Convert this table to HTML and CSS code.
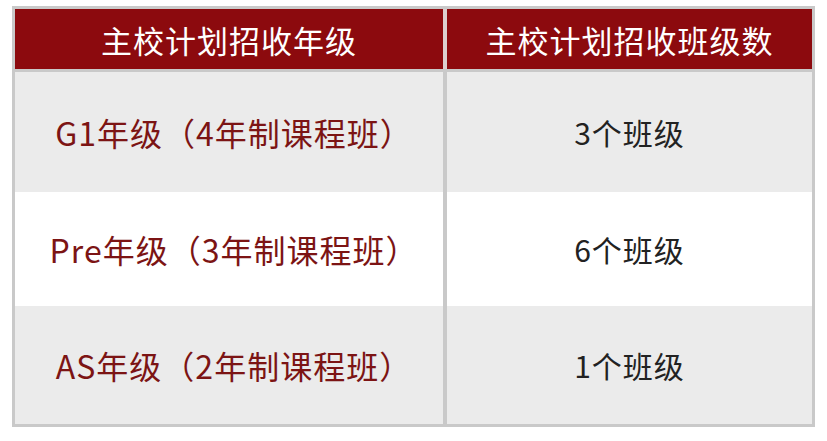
FILE: index.html
```html
<!DOCTYPE html>
<html lang="zh">
<head>
<meta charset="utf-8">
<link rel="stylesheet" href="styles.css">
</head>
<body>
<div class="table">
  <div class="row head">
    <div class="cell c1">主校计划招收年级</div>
    <div class="cell c2">主校计划招收班级数</div>
  </div>
  <div class="row r1 gray">
    <div class="cell c1 red">G1年级（4年制课程班）</div>
    <div class="cell c2">3个班级</div>
  </div>
  <div class="row r2">
    <div class="cell c1 red">Pre年级（3年制课程班）</div>
    <div class="cell c2">6个班级</div>
  </div>
  <div class="row r3 gray">
    <div class="cell c1 red">AS年级（2年制课程班）</div>
    <div class="cell c2">1个班级</div>
  </div>
</div>
</body>
</html>
```
FILE: styles.css
```css
html, body {
  margin: 0;
  padding: 0;
  background: #ffffff;
}
body {
  font-family: "Noto Sans CJK SC", "Noto Sans", sans-serif;
}
.table {
  margin: 6px 0 0 12px;
  width: 803px;
  border: 3px solid #c9c9c9;
  box-sizing: border-box;
  background: #c9c9c9;
  display: flex;
  flex-direction: column;
}
.row {
  display: flex;
  gap: 4px;
}
.head {
  height: 60px;
  margin-bottom: 3px;
  background: #dccfcf;
}
.head .cell {
  background: #8c0a0e;
  color: #ffffff;
  font-size: 31px;
  letter-spacing: 1px;
}
.r1 { height: 120px; }
.r2 { height: 114px; }
.r3 { height: 118px; }
.cell {
  display: flex;
  align-items: center;
  justify-content: center;
  box-sizing: border-box;
  font-size: 30px;
  letter-spacing: 1px;
  color: #222222;
}
.c1 { width: 428px; }
.c2 { width: 365px; }
.gray .cell { background: #ebebeb; }
.r2 .cell { background: #ffffff; }
.red {
  color: #7c1414;
  font-size: 32px;
  letter-spacing: 1px;
  padding-left: 10px;
}
```
